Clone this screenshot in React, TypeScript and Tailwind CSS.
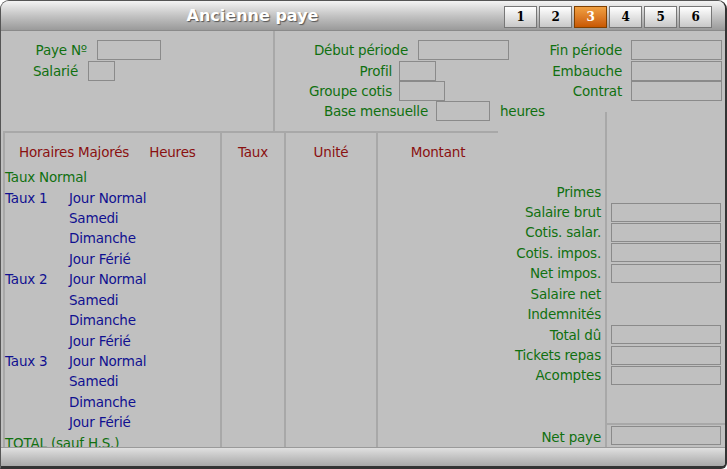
const G = "text-[#107010]";
const B = "text-[#101090]";
const R = "text-[#8a1010]";

function Inp({ w, h = 20 }: { w: number; h?: number }) {
  return <div className="border border-[#8a8a8a] bg-[#c0c0c0] shrink-0" style={{ width: w, height: h }} />;
}

function LRow({ label, lw, iw, mt = 0, gap = 9 }: { label: string; lw: number; iw: number; mt?: number; gap?: number }) {
  return (
    <div className="flex items-center h-[20px]" style={{ marginTop: mt }}>
      <div className={`${G} text-right shrink-0 whitespace-nowrap`} style={{ width: lw }}>{label}</div>
      <div className="shrink-0" style={{ width: gap }} />
      <Inp w={iw} />
    </div>
  );
}

const rows: [string, string][] = [
  ["Taux Normal", ""],
  ["Taux 1", "Jour Normal"], ["", "Samedi"], ["", "Dimanche"], ["", "Jour Férié"],
  ["Taux 2", "Jour Normal"], ["", "Samedi"], ["", "Dimanche"], ["", "Jour Férié"],
  ["Taux 3", "Jour Normal"], ["", "Samedi"], ["", "Dimanche"], ["", "Jour Férié"],
  ["TOTAL (sauf H.S.)", ""],
];

const right: [string, boolean][] = [
  ["", false], ["Primes", false], ["Salaire brut", true], ["Cotis. salar.", true], ["Cotis. impos.", true],
  ["Net impos.", true], ["Salaire net", false], ["Indemnités", false], ["Total dû", true],
  ["Tickets repas", true], ["Acomptes", true], ["", false], ["", false], ["Net paye", true],
];

const RH = 20.45;

export default function App() {
  return (
    <div className="w-[727px] h-[469px] bg-white text-[13.5px]" style={{ fontFamily: '"DejaVu Sans", sans-serif', letterSpacing: "-0.2px" }}>
      <div className="w-[727px] h-[469px] rounded-t-[9px] rounded-br-[6px] border border-[#555] border-r-[2px] border-b-[3px] border-r-[#333] border-b-[#333] bg-[#c0c0c0] flex flex-col overflow-hidden relative">
        <div className="h-[30px] shrink-0 flex items-center bg-gradient-to-b from-[#f4f4f4] via-[#c4c4c4] to-[#9a9a9a] border-b border-[#8a8a8a]">
          <div className="w-[503px] shrink-0 text-center text-white font-bold text-[16px]" style={{ textShadow: "1px 1px 1px #555", letterSpacing: 0 }}>Ancienne paye</div>
          <div className="flex gap-[2px] mt-[3px]">
            {["1", "2", "3", "4", "5", "6"].map((t) => (
              <div key={t} className={`w-[33px] h-[22px] flex items-center justify-center font-bold text-[12px] border ${t === "3" ? "bg-gradient-to-b from-[#f0a040] to-[#c85800] border-[#804000] text-white" : "bg-gradient-to-b from-[#ffffff] to-[#c8c8c8] border-[#777] text-black"}`} style={{ fontFamily: '"DejaVu Serif", serif' }}>{t}</div>
            ))}
          </div>
        </div>
        <div className="h-[100px] shrink-0 flex relative">
          <div className="w-[274px] shrink-0 border-r-2 border-[#a8a8a8] pt-[9px] pl-[2px]">
            <LRow label="Paye Nº" lw={84} iw={64} gap={10} />
            <LRow label="Salarié" lw={75} iw={27} mt={1} gap={10} />
          </div>
          <div className="pt-[9px] w-[244px] shrink-0">
            <LRow label="Début période" lw={133} iw={91} gap={10} />
            <LRow label="Profil" lw={117} iw={37} mt={1} gap={7} />
            <LRow label="Groupe cotis" lw={117} iw={46} gap={7} />
            <div className="flex items-center h-[20px]">
              <div className={`${G} text-right w-[153px] shrink-0`}>Base mensuelle</div>
              <div className="w-[8px] shrink-0" />
              <Inp w={54} />
              <div className={`${G} ml-[10px]`}>heures</div>
            </div>
          </div>
          <div className="pt-[9px] shrink-0">
            <LRow label="Fin période" lw={103} iw={91} />
            <LRow label="Embauche" lw={103} iw={91} mt={1} />
            <LRow label="Contrat" lw={103} iw={91} />
          </div>
          <div className="absolute left-[604px] top-[81px] h-[19px] border-l-2 border-[#a8a8a8]" />
        </div>
        <div className="flex h-[316px] pl-[2px]">
          <div className="flex border-t-2 border-l-2 border-[#a8a8a8] w-[495px] shrink-0">
            <div className="w-[217px] shrink-0 border-r-2 border-[#a8a8a8]">
              <div className="h-[34px] flex items-center pt-[4px]">
                <span className={`${R} ml-[14px] whitespace-nowrap`}>Horaires Majorés</span>
                <span className={`${R} ml-[20px]`}>Heures</span>
              </div>
              {rows.map(([a, b], i) => (
                <div key={i} className="flex items-center" style={{ height: RH }}>
                  <span className={`${i === 0 || i === 13 ? G : B} whitespace-nowrap shrink-0`} style={{ width: a && !b ? "auto" : 64 }}>{a}</span>
                  {b && <span className={`${B} whitespace-nowrap`}>{b}</span>}
                </div>
              ))}
            </div>
            <div className="w-[64px] shrink-0 border-r-2 border-[#a8a8a8]"><div className={`h-[38px] flex items-center justify-center ${R}`}>Taux</div></div>
            <div className="w-[92px] shrink-0 border-r-2 border-[#a8a8a8]"><div className={`h-[38px] flex items-center justify-center ${R}`}>Unité</div></div>
            <div className="w-[120px] shrink-0"><div className={`h-[38px] flex items-center justify-center ${R}`}>Montant</div></div>
          </div>
          <div className="flex-1 flex">
            <div className="w-[107px] shrink-0 pt-[30px]">
              {right.map(([l], i) => (
                <div key={i} className={`${G} text-right pr-[4px] flex items-center justify-end whitespace-nowrap`} style={{ height: RH }}>{l}</div>
              ))}
            </div>
            <div className="flex-1 border-l-2 border-[#a8a8a8] pt-[30px] flex flex-col">
              {right.map(([, has], i) => (
                <div key={i} className={`flex items-center pl-[4px] ${i === 12 ? "border-b-2 border-[#a8a8a8]" : ""}`} style={{ height: i === 12 ? RH - 2 : i === 13 ? RH + 2 : RH }}>
                  {has && <Inp w={110} h={19} />}
                </div>
              ))}
            </div>
          </div>
        </div>
        <div className="flex-1 bg-gradient-to-b from-[#e0e0e0] to-[#a8a8a8] border-t border-[#9a9a9a]" />
      </div>
    </div>
  );
}
